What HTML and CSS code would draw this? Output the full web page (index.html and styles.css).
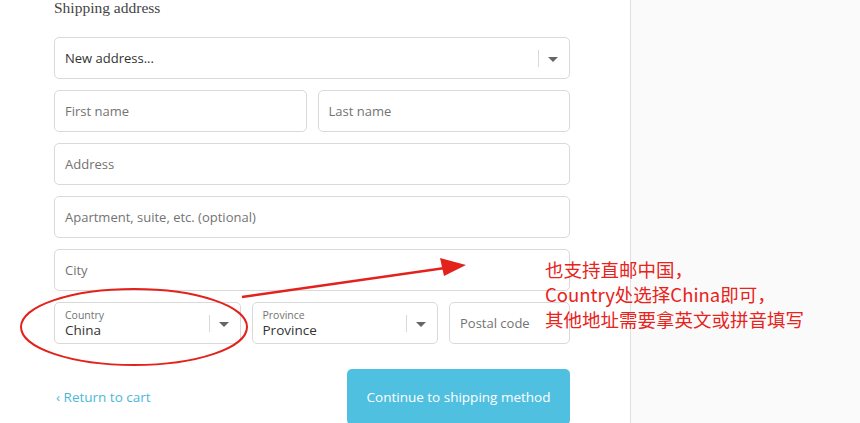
FILE: index.html
```html
<!DOCTYPE html>
<html>
<head>
    <title>Shipping address</title>
    <link rel="stylesheet" href="styles.css">
</head>
<body>
    <div class="main">
        <h2 class="section-title">Shipping address</h2>

        <div class="field select">
            <span class="value">New address...</span>
            <span class="caret"></span>
        </div>

        <div class="row two">
            <div class="field"><span class="placeholder">First name</span></div>
            <div class="field"><span class="placeholder">Last name</span></div>
        </div>

        <div class="field"><span class="placeholder">Address</span></div>
        <div class="field"><span class="placeholder">Apartment, suite, etc. (optional)</span></div>
        <div class="field"><span class="placeholder">City</span></div>

        <div class="row three">
            <div class="field select floating">
                <div class="stack">
                    <span class="label">Country</span>
                    <span class="value">China</span>
                </div>
                <span class="caret"></span>
            </div>
            <div class="field select floating">
                <div class="stack">
                    <span class="label">Province</span>
                    <span class="value">Province</span>
                </div>
                <span class="caret"></span>
            </div>
            <div class="field"><span class="placeholder">Postal code</span></div>
        </div>

        <div class="actions">
            <a class="back" href="#">&lsaquo; Return to cart</a>
            <button class="continue">Continue to shipping method</button>
        </div>
    </div>
    <div class="sidebar"></div>

    <!-- 标注 -->
    <svg class="marks" width="860" height="423" viewBox="0 0 860 423">
        <ellipse cx="134" cy="327" rx="113" ry="38" fill="none" stroke="#e3221b" stroke-width="2"/>
        <line x1="242" y1="297" x2="445" y2="268" stroke="#e3221b" stroke-width="2.5"/>
        <polygon points="466,265 440,258 444,276" fill="#e3221b"/>
    </svg>
    <div class="note">
        也支持直邮中国，<br>
        Country处选择China即可，<br>
        其他地址需要拿英文或拼音填写
    </div>
</body>
</html>
```

FILE: styles.css
```css
/* 기본 */
body {
    margin: 0;
    display: flex;
    min-height: 423px;
    font-family: "Open Sans", "Noto Sans", sans-serif;
    color: #333;
    background: #fff;
    overflow: hidden;
}

.main {
    width: 516px;
    padding: 0 60px 0 54px;
    flex: none;
}

.sidebar {
    flex: 1;
    background: #fafafa;
    border-left: 1px solid #e1e1e1;
}

.section-title {
    font-family: "Liberation Serif", serif;
    font-weight: normal;
    font-size: 15.5px;
    line-height: 16px;
    margin: 0 0 21px;
    color: #444;
}

/* 입력 필드 */
.field {
    box-sizing: border-box;
    height: 42px;
    border: 1px solid #d9d9d9;
    border-radius: 5px;
    padding: 0 10px;
    display: flex;
    align-items: center;
    font-size: 13px;
    margin-bottom: 11px;
    position: relative;
    background: #fff;
}

.row {
    display: grid;
    column-gap: 11px;
}
.row.two { grid-template-columns: 1fr 1fr; }
.row.three { grid-template-columns: 1fr 1fr 121px; }

.placeholder { color: #737373; }
.value { color: #333; }

.select { padding-right: 40px; }

.caret {
    position: absolute;
    right: 0;
    top: 12px;
    width: 30px;
    height: 17px;
    border-left: 1px solid #d9d9d9;
}
.caret::after {
    content: "";
    position: absolute;
    left: 9px;
    top: 7px;
    border-left: 5px solid transparent;
    border-right: 5px solid transparent;
    border-top: 5px solid #666;
}

.floating .stack {
    display: flex;
    flex-direction: column;
    padding-top: 1px;
}
.floating .label {
    font-size: 10.5px;
    line-height: 13px;
    color: #737373;
}
.floating .value {
    font-size: 13.5px;
    line-height: 16px;
}

/* 하단 버튼 */
.actions {
    display: flex;
    justify-content: space-between;
    align-items: center;
    margin-top: 14px;
}

.back {
    color: #4cb8d9;
    text-decoration: none;
    font-size: 13.5px;
    margin-left: 2px;
}

.continue {
    width: 223px;
    height: 56px;
    border: none;
    border-radius: 5px;
    background: #50c0e0;
    color: #fff;
    font-family: inherit;
    font-size: 13.5px;
    padding: 0;
}

/* 빨간 주석 */
.marks {
    position: absolute;
    left: 0;
    top: 0;
    pointer-events: none;
}

.note {
    position: absolute;
    left: 545px;
    top: 257px;
    font-family: "Noto Sans CJK SC", sans-serif;
    font-size: 18.5px;
    line-height: 25px;
    color: #e8231c;
}
```
